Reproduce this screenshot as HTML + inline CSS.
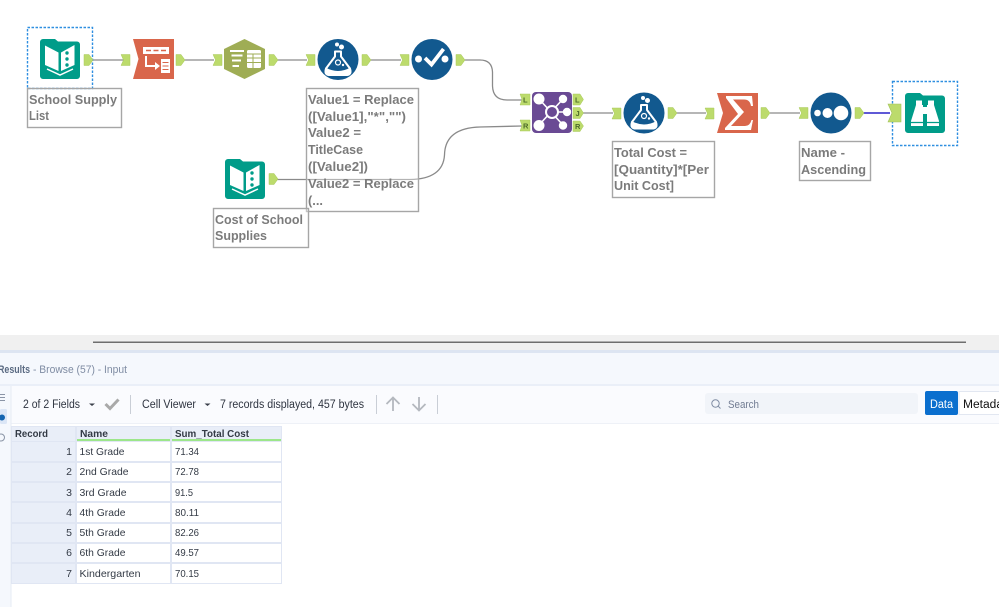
<!DOCTYPE html>
<html><head><meta charset="utf-8"><style>
html,body{margin:0;padding:0;background:#fff;width:999px;height:607px;overflow:hidden}
svg{display:block}
text{font-family:"Liberation Sans",sans-serif}
.a{font-size:13px;font-weight:bold;fill:#7b7b7b}
.t{font-size:10.5px;fill:#333a45}
.h{font-size:10.5px;font-weight:bold;fill:#333a45}
.w{fill:none;stroke:#8a8a8a;stroke-width:1.3}
.box{fill:#fff;fill-opacity:.35;stroke:#a6a6a6;stroke-width:1.4}
.sel{fill:none;stroke:#2f8fe0;stroke-width:1.4;stroke-dasharray:2.5 1.5}
.anc{fill:#bcdb6c;stroke:#a9c95e;stroke-width:.5}
.lt{font-size:7.5px;font-weight:bold;fill:#4d6b2a}
</style></head><body>
<svg width="999" height="607" viewBox="0 0 999 607" xmlns="http://www.w3.org/2000/svg">
<defs>
<path id="o" class="anc" d="M0 0H5L9 5.500L5 11H0z"/>
<path id="i" class="anc" d="M0 0H9V11H0L2.500 5.500z"/>
<g id="book">
<path fill="#009c89" d="M3 0H15L18 2.500H37a3 3 0 0 1 3 3V37a3 3 0 0 1-3 3H3a3 3 0 0 1-3-3V3a3 3 0 0 1 3-3z"/>
<path fill="#fff" d="M5 6.500L18.500 13.500V32L5 26z"/>
<path fill="#fff" d="M21 13.500L34.500 6V26L21 32z"/>
<circle cx="27" cy="14" r="1.700" fill="#009c89"/><circle cx="27" cy="20" r="1.700" fill="#009c89"/><circle cx="27" cy="26" r="1.700" fill="#009c89"/>
<path fill="none" stroke="#fff" stroke-width="1.500" d="M7 30L20 36L33 30"/>
</g>
<g id="flask">
<circle r="20.500" fill="#12598f"/>
<path fill="#12598f" stroke="#fff" stroke-width="2" stroke-linejoin="round" d="M-3-8V-3L-12 9Q-14 15.500-8 15.500H8Q14 15.500 12 9L3-3V-8z"/>
<path fill="#fff" d="M-12.500 8Q0 15 12.500 8L13.500 12Q13.500 16.500 8 16.500H-8Q-13.500 16.500-13.500 12z"/>
<circle cx="0" cy="3" r="2.500" fill="none" stroke="#fff" stroke-width="1.200"/>
<circle cx="5" cy="5.500" r="1.200" fill="#fff"/>
<circle cx="-1" cy="-15" r="2" fill="#fff"/><circle cx="3.500" cy="-12.500" r="2.500" fill="#fff"/>
</g>
</defs>

<rect width="999" height="607" fill="#fff"/>

<!-- wires -->
<path class="w" d="M92 60H124M184 60H214M277 60H307M370 60H401"/>
<path class="w" d="M464 60H480Q492 60 492.500 72V86Q493 100 507 100H522"/>
<path class="w" d="M277 179.500H410Q443 179 444.500 155Q445 128 480 127L522 126"/>
<path class="w" d="M583 113H613M676 113H706M770 113H800"/>
<path fill="none" stroke="#2a22c9" stroke-width="1.500" d="M863 113H890"/>

<!-- selection boxes -->
<rect class="sel" x="27.500" y="27.500" width="65" height="61"/>
<rect class="sel" x="892.500" y="81.500" width="65" height="64"/>

<!-- row 1 tools -->
<use href="#book" x="40" y="39"/>
<use href="#o" x="84" y="54.500"/>
<use href="#i" x="121" y="54.500"/>

<path fill="#d9664b" d="M133 39H174V79H133L138.500 59z"/>
<rect x="143" y="47" width="26" height="7" fill="#fff"/>
<path stroke="#d9664b" stroke-width="1.500" d="M146 50.500H151M153.500 50.500H158.500M161 50.500H166"/>
<path fill="none" stroke="#fff" stroke-width="2" d="M146 56V66H157"/>
<path fill="#fff" d="M155 62L160 66L155 70z"/>
<rect x="161" y="59" width="9" height="14" fill="#fff"/>
<path stroke="#d9664b" stroke-width="1" d="M162.500 62.500H168.500M162.500 66H168.500M162.500 69.500H168.500"/>

<use href="#o" x="176" y="54.500"/>
<use href="#i" x="213" y="54.500"/>

<path fill="#9fad55" d="M244.500 39L265 49V69L244.500 79L224 69V49z"/>
<path stroke="#fff" stroke-width="2" d="M230 51H244M231.500 55.500H242.500M232 60.500H241M232.500 66H239"/>
<rect x="247" y="50" width="14" height="18" rx="1.500" fill="#fff"/>
<path stroke="#9fad55" stroke-width="1" d="M247 54H261M247 58H261M247 62.500H261M253 54V68"/>

<use href="#o" x="269" y="54.500"/>
<use href="#i" x="306" y="54.500"/>
<use href="#flask" x="338" y="59.500"/>
<use href="#o" x="362" y="54.500"/>
<use href="#i" x="400" y="54.500"/>

<circle cx="432" cy="59.500" r="20.500" fill="#12598f"/>
<circle cx="418.500" cy="59" r="3.500" fill="#fff"/><circle cx="445" cy="59" r="3.500" fill="#fff"/>
<path fill="none" stroke="#fff" stroke-width="3.800" d="M425 58L431.500 64.500L443.500 49"/>
<use href="#o" x="456" y="54.500"/>

<!-- second input -->
<use href="#book" x="225" y="159"/>
<use href="#o" x="269" y="173.500"/>

<!-- join -->
<path class="anc" d="M520 94H530V105H520L522 99.500z"/>
<path class="anc" d="M520 120H530V131H520L522 125.500z"/>
<text class="lt" x="523" y="102.500">L</text><text class="lt" x="523" y="128.500">R</text>
<rect x="532" y="92" width="40" height="41" rx="4" fill="#6a4a94"/>
<path stroke="#fff" stroke-width="1.600" d="M539 99L563 125M563 99L539 125M552 112H567"/>
<circle cx="539" cy="99" r="5.500" fill="#fff"/><circle cx="563" cy="99" r="4.200" fill="#fff"/><circle cx="567" cy="112" r="4.200" fill="#fff"/><circle cx="539" cy="125.500" r="5.500" fill="#fff"/><circle cx="563" cy="125.500" r="4.200" fill="#fff"/>
<circle cx="552" cy="112" r="6" fill="#6a4a94" stroke="#fff" stroke-width="2"/>
<path class="anc" d="M573 94H580L583.500 99.500L580 105H573z"/>
<path class="anc" d="M573 107.500H580L583.500 113L580 118.500H573z"/>
<path class="anc" d="M573 121H580L583.500 126L580 131.500H573z"/>
<text class="lt" x="575" y="102.500">L</text><text class="lt" x="575.500" y="116">J</text><text class="lt" x="575" y="129">R</text>

<use href="#i" x="612" y="108"/>
<use href="#flask" x="644" y="113"/>
<use href="#o" x="668" y="107.500"/>
<use href="#i" x="705" y="108"/>

<path fill="#d9664b" d="M717 93H758V133H717L723 113z"/>
<path fill="#fff" d="M726 96H752L753 106H751Q750 99.500 744 99.500H733L744 112L731 126H745Q750 126 751.500 120H753L751 130H725V128L738 114L726 98z"/>
<use href="#o" x="761" y="107.500"/>
<use href="#i" x="799" y="107.500"/>

<circle cx="831" cy="113" r="20.500" fill="#12598f"/>
<circle cx="817.500" cy="113" r="3.300" fill="#fff"/><circle cx="827.500" cy="113" r="5" fill="#fff"/><circle cx="841" cy="113" r="7.300" fill="#fff"/>
<use href="#o" x="855" y="107.500"/>

<path fill="#bcdb6c" stroke="#a3c25a" stroke-width=".6" d="M888 104H901V122H888L892 113z"/>

<g transform="translate(905 93)">
<path fill="#009c89" d="M3 0H15L18 2.500H37a3 3 0 0 1 3 3V37a3 3 0 0 1-3 3H3a3 3 0 0 1-3-3V3a3 3 0 0 1 3-3z"/>
<path fill="#fff" d="M11 7.500H17V12H18V33H6V28L11 12z"/>
<path fill="#fff" d="M23 7.500H29V12L34 28V33H22V12H23z"/>
<rect x="18" y="14" width="4" height="7" fill="#fff"/>
<path stroke="#009c89" stroke-width="1.200" d="M6 29.500H18M22 29.500H34M20 23V33"/>
</g>

<!-- annotations -->
<rect class="box" x="27.500" y="88.500" width="94" height="39"/>
<text class="a" x="29" y="104" textLength="88" lengthAdjust="spacingAndGlyphs">School Supply</text>
<text class="a" x="29" y="120" textLength="20" lengthAdjust="spacingAndGlyphs">List</text>

<rect class="box" x="306.500" y="88.500" width="112" height="123"/>
<text class="a" x="308" y="104" textLength="106" lengthAdjust="spacingAndGlyphs">Value1 = Replace</text>
<text class="a" x="308" y="121" textLength="98" lengthAdjust="spacingAndGlyphs">([Value1],"*","")</text>
<text class="a" x="308" y="137" textLength="53" lengthAdjust="spacingAndGlyphs">Value2 =</text>
<text class="a" x="308" y="154" textLength="55" lengthAdjust="spacingAndGlyphs">TitleCase</text>
<text class="a" x="308" y="171" textLength="60" lengthAdjust="spacingAndGlyphs">([Value2])</text>
<text class="a" x="308" y="188" textLength="106" lengthAdjust="spacingAndGlyphs">Value2 = Replace</text>
<text class="a" x="308" y="205" textLength="15" lengthAdjust="spacingAndGlyphs">(...</text>

<rect class="box" x="213.500" y="208.500" width="95" height="39"/>
<text class="a" x="215" y="224" textLength="88" lengthAdjust="spacingAndGlyphs">Cost of School</text>
<text class="a" x="215" y="240" textLength="52" lengthAdjust="spacingAndGlyphs">Supplies</text>

<rect class="box" x="612.500" y="141.500" width="102" height="56"/>
<text class="a" x="614" y="157" textLength="73" lengthAdjust="spacingAndGlyphs">Total Cost =</text>
<text class="a" x="614" y="174" textLength="95" lengthAdjust="spacingAndGlyphs">[Quantity]*[Per</text>
<text class="a" x="614" y="190" textLength="60" lengthAdjust="spacingAndGlyphs">Unit Cost]</text>

<rect class="box" x="799.500" y="141.500" width="71" height="39"/>
<text class="a" x="801" y="157" textLength="44" lengthAdjust="spacingAndGlyphs">Name -</text>
<text class="a" x="801" y="174" textLength="65" lengthAdjust="spacingAndGlyphs">Ascending</text>

<!-- divider band -->
<rect y="335" width="999" height="15" fill="#f0f0f0"/>
<rect x="93" y="341.500" width="873" height="1.500" fill="#6e6e6e"/>
<rect y="350" width="999" height="3" fill="#dde5f2"/>

<!-- results panel -->
<rect y="353" width="999" height="254" fill="#f5f8fd"/>
<rect y="384.500" width="999" height="1" fill="#dfe6f2"/>
<rect x="11" y="386" width="988" height="221" fill="#fff"/>
<rect x="11" y="386" width="988" height="37" fill="#fafbfe"/>
<rect x="11" y="423" width="988" height="1" fill="#eef1f7"/>
<rect x="10.500" y="386" width="1" height="221" fill="#e6ebf4"/>

<text x="-2" y="373" font-size="11" font-weight="bold" fill="#5a6a82" textLength="32" lengthAdjust="spacingAndGlyphs">Results</text>
<text x="33" y="373" font-size="11" fill="#7f8ca3" textLength="94" lengthAdjust="spacingAndGlyphs">- Browse (57) - Input</text>

<!-- side icons -->
<path stroke="#8a94a6" stroke-width="1" d="M0 394.500H5M0 397.500H5M0 400.500H5"/>
<rect x="0" y="409" width="7" height="15" rx="1.500" fill="#dbe6f6"/>
<circle cx="2" cy="417.500" r="3" fill="#1565b0"/>
<circle cx="1" cy="437.500" r="3.500" fill="none" stroke="#8a94a6" stroke-width="1"/>

<!-- toolbar -->
<text x="23" y="408" font-size="11.500" fill="#2e3440" textLength="57" lengthAdjust="spacingAndGlyphs">2 of 2 Fields</text>
<path fill="#3a3f4a" d="M89 403.500H95L92 406z"/>
<path fill="none" stroke="#a9a9a9" stroke-width="3" d="M105.500 404L110 408.500L118.500 399.500"/>
<rect x="130" y="395" width="1" height="19" fill="#c9ced6"/>
<text x="142" y="408" font-size="11.500" fill="#2e3440" textLength="54" lengthAdjust="spacingAndGlyphs">Cell Viewer</text>
<path fill="#3a3f4a" d="M204.500 403.500H210.500L207.500 406z"/>
<text x="220" y="408" font-size="11.500" fill="#2e3440" textLength="144" lengthAdjust="spacingAndGlyphs">7 records displayed, 457 bytes</text>
<rect x="376" y="395" width="1" height="19" fill="#c9ced6"/>
<path fill="none" stroke="#b4b8bf" stroke-width="1.800" d="M393 411V398M386.500 404L393 397.500L399.500 404M419 397V410M412.500 404L419 410.500L425.500 404"/>
<rect x="437" y="395" width="1" height="19" fill="#c9ced6"/>

<rect x="705" y="393" width="213" height="21" rx="3" fill="#f1f4f9"/>
<circle cx="715.500" cy="403.500" r="3.700" fill="none" stroke="#7f8ca3" stroke-width="1"/>
<path stroke="#7f8ca3" stroke-width="1" d="M718.200 406.200L720.500 408.500"/>
<text x="728" y="408" font-size="11" fill="#717c92" textLength="31" lengthAdjust="spacingAndGlyphs">Search</text>

<rect x="959" y="391.500" width="42" height="23" fill="#fff" stroke="#e2e7f1"/>
<rect x="925" y="391" width="33" height="24" rx="2" fill="#0b6fce"/>
<text x="930" y="408" font-size="11.500" fill="#fff" textLength="23" lengthAdjust="spacingAndGlyphs">Data</text>
<text x="963" y="408" font-size="11.500" fill="#111" textLength="40" lengthAdjust="spacingAndGlyphs">Metada</text>

<!-- table -->
<rect x="11" y="426" width="271" height="158" fill="#e0e6f3"/>
<rect x="12" y="427" width="63" height="14" fill="#e9eef8"/>
<rect x="77" y="427" width="93" height="12" fill="#e9eef8"/>
<rect x="172" y="427" width="109" height="12" fill="#e9eef8"/>
<rect x="77" y="439" width="93" height="2" fill="#9ce68a"/>
<rect x="172" y="439" width="109" height="2" fill="#9ce68a"/>

<g fill="#e9eef8">
<rect x="12" y="442" width="63" height="19"/><rect x="12" y="463" width="63" height="18"/><rect x="12" y="483" width="63" height="18"/><rect x="12" y="503" width="63" height="19"/><rect x="12" y="524" width="63" height="18"/><rect x="12" y="544" width="63" height="18"/><rect x="12" y="564" width="63" height="19"/>
</g>
<g fill="#fff">
<rect x="77" y="442" width="93" height="19"/><rect x="77" y="463" width="93" height="18"/><rect x="77" y="483" width="93" height="18"/><rect x="77" y="503" width="93" height="19"/><rect x="77" y="524" width="93" height="18"/><rect x="77" y="544" width="93" height="18"/><rect x="77" y="564" width="93" height="19"/>
<rect x="172" y="442" width="109" height="19"/><rect x="172" y="463" width="109" height="18"/><rect x="172" y="483" width="109" height="18"/><rect x="172" y="503" width="109" height="19"/><rect x="172" y="524" width="109" height="18"/><rect x="172" y="544" width="109" height="18"/><rect x="172" y="564" width="109" height="19"/>
</g>

<text class="h" x="15" y="437" textLength="33" lengthAdjust="spacingAndGlyphs">Record</text>
<text class="h" x="80" y="437" textLength="28" lengthAdjust="spacingAndGlyphs">Name</text>
<text class="h" x="175" y="437" textLength="74" lengthAdjust="spacingAndGlyphs">Sum_Total Cost</text>

<g text-anchor="end" class="t">
<text x="72" y="455">1</text><text x="72" y="475">2</text><text x="72" y="496">3</text><text x="72" y="516">4</text><text x="72" y="536">5</text><text x="72" y="556">6</text><text x="72" y="577">7</text>
</g>
<text class="t" x="79.500" y="455" textLength="45" lengthAdjust="spacingAndGlyphs">1st Grade</text>
<text class="t" x="79.500" y="475" textLength="49" lengthAdjust="spacingAndGlyphs">2nd Grade</text>
<text class="t" x="79.500" y="496" textLength="47" lengthAdjust="spacingAndGlyphs">3rd Grade</text>
<text class="t" x="79.500" y="516" textLength="46" lengthAdjust="spacingAndGlyphs">4th Grade</text>
<text class="t" x="79.500" y="536" textLength="46" lengthAdjust="spacingAndGlyphs">5th Grade</text>
<text class="t" x="79.500" y="556" textLength="46" lengthAdjust="spacingAndGlyphs">6th Grade</text>
<text class="t" x="79.500" y="577" textLength="61" lengthAdjust="spacingAndGlyphs">Kindergarten</text>
<text class="t" x="175" y="455" textLength="24" lengthAdjust="spacingAndGlyphs">71.34</text>
<text class="t" x="175" y="475" textLength="24" lengthAdjust="spacingAndGlyphs">72.78</text>
<text class="t" x="175" y="496" textLength="18" lengthAdjust="spacingAndGlyphs">91.5</text>
<text class="t" x="175" y="516" textLength="24" lengthAdjust="spacingAndGlyphs">80.11</text>
<text class="t" x="175" y="536" textLength="24" lengthAdjust="spacingAndGlyphs">82.26</text>
<text class="t" x="175" y="556" textLength="24" lengthAdjust="spacingAndGlyphs">49.57</text>
<text class="t" x="175" y="577" textLength="24" lengthAdjust="spacingAndGlyphs">70.15</text>
</svg>
</body></html>
